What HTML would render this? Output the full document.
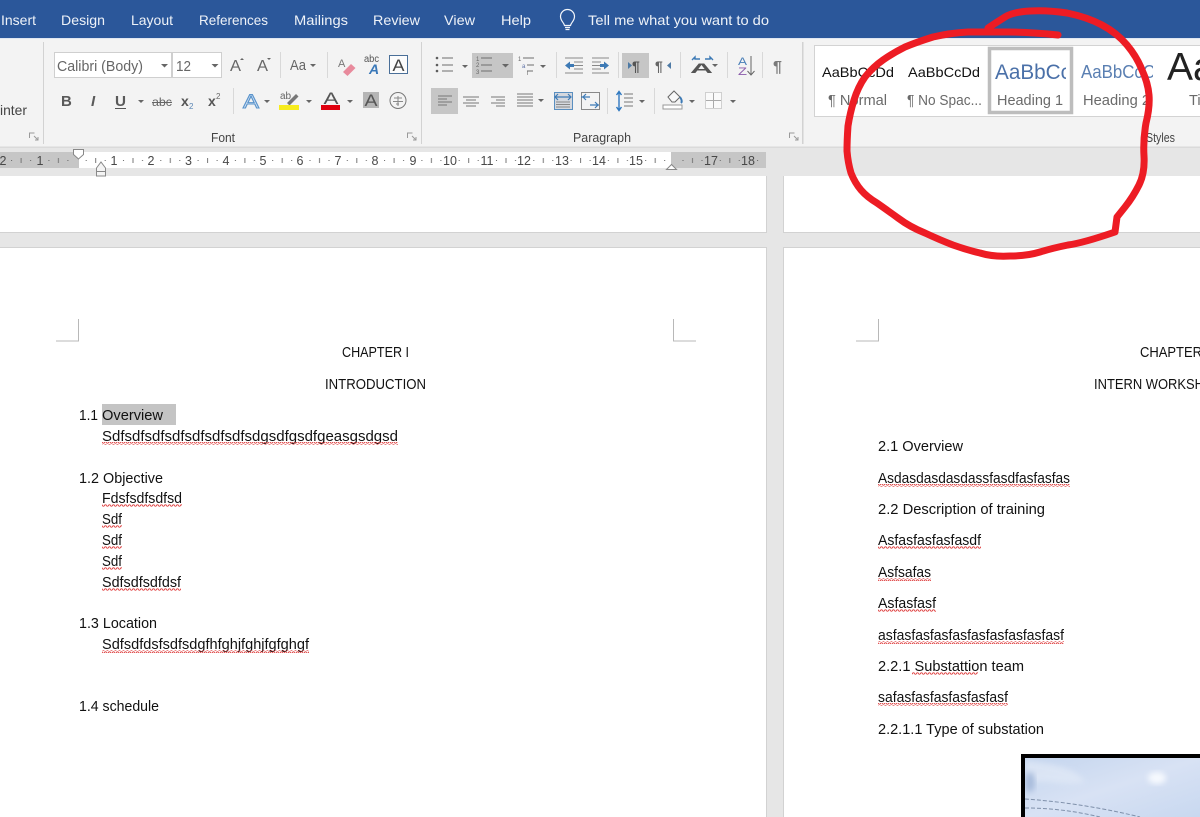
<!DOCTYPE html>
<html><head><meta charset="utf-8"><style>
html,body{margin:0;padding:0;background:#fff;overflow:hidden}
svg{display:block}
text{font-family:"Liberation Sans",sans-serif}
.tab{font-size:14px;fill:#eef2f8}
.doc{font-size:14.500px;fill:#111}
.lbl{font-size:12.500px;fill:#444}
.rul{font-size:12.500px;fill:#484848}
.sty{font-size:14.500px;fill:#6a6a6a}
</style></head><body>
<svg xmlns="http://www.w3.org/2000/svg" width="1200" height="817" viewBox="0 0 1200 817">
<defs>
<pattern id="sq" width="4" height="3" patternUnits="userSpaceOnUse"><path d="M0 2.200 L1 .8 L2 .8 L3 2.200 L4 2.200" fill="none" stroke="#dd3a3a" stroke-width=".9"/></pattern>
<pattern id="tk" x="114" y="153" width="37.300" height="15" patternUnits="userSpaceOnUse"><rect x="9" y="7" width="1" height="1" fill="#666"/><rect x="18.500" y="5" width="1" height="5" fill="#777"/><rect x="28" y="7" width="1" height="1" fill="#666"/></pattern>
<linearGradient id="sky" x1="0" y1="0" x2="1" y2="1"><stop offset="0" stop-color="#c4d5ee"/><stop offset=".5" stop-color="#d8e2f4"/><stop offset="1" stop-color="#c8d8f0"/></linearGradient>
<filter id="bl" x="-20%" y="-20%" width="140%" height="140%"><feGaussianBlur stdDeviation="3"/></filter>
<clipPath id="c1"><rect x="994" y="50" width="72" height="40"/></clipPath>
<clipPath id="c2"><rect x="1078" y="50" width="75" height="40"/></clipPath>
<clipPath id="c3"><rect x="1025" y="758" width="175" height="59"/></clipPath>
</defs>

<!-- backgrounds -->
<rect width="1200" height="817" fill="#e6e6e6"/>
<rect width="1200" height="38" fill="#2b579a"/>
<rect y="38" width="1200" height="1.500" fill="#dfe6f1"/>
<rect y="39" width="1200" height="108" fill="#f3f3f3"/>
<rect y="146.500" width="1200" height="1.500" fill="#dadada"/>

<!-- pages -->
<rect x="0" y="176" width="766" height="56" fill="#fff"/>
<rect x="784" y="176" width="416" height="56" fill="#fff"/>
<g fill="#d2d2d2">
<rect x="0" y="232" width="767" height="1"/><rect x="783" y="232" width="417" height="1"/>
<rect x="766" y="176" width="1" height="57"/><rect x="783" y="176" width="1" height="57"/>
<rect x="0" y="247" width="767" height="1"/><rect x="783" y="247" width="417" height="1"/>
<rect x="766" y="247" width="1" height="570"/><rect x="783" y="247" width="1" height="570"/>
</g>
<rect x="0" y="248" width="766" height="569" fill="#fff"/>
<rect x="784" y="248" width="416" height="569" fill="#fff"/>

<!-- tabs -->
<text class="tab" x="1" y="25" textLength="35" lengthAdjust="spacingAndGlyphs">Insert</text>
<text class="tab" x="61" y="25" textLength="44" lengthAdjust="spacingAndGlyphs">Design</text>
<text class="tab" x="131" y="25" textLength="42" lengthAdjust="spacingAndGlyphs">Layout</text>
<text class="tab" x="199" y="25" textLength="69" lengthAdjust="spacingAndGlyphs">References</text>
<text class="tab" x="294" y="25" textLength="54" lengthAdjust="spacingAndGlyphs">Mailings</text>
<text class="tab" x="373" y="25" textLength="47" lengthAdjust="spacingAndGlyphs">Review</text>
<text class="tab" x="444" y="25" textLength="31" lengthAdjust="spacingAndGlyphs">View</text>
<text class="tab" x="501" y="25" textLength="30" lengthAdjust="spacingAndGlyphs">Help</text>
<text class="tab" x="588" y="25" textLength="181" lengthAdjust="spacingAndGlyphs">Tell me what you want to do</text>
<path d="M564.500 25.500c-.5-3-4-4.500-4-9a7 7 0 0 1 14 0c0 4.500-3.500 6-4 9zM565 27.500h5M565.500 29.500h4" fill="none" stroke="#f2f5fa" stroke-width="1.200"/>

<!-- group separators -->
<g fill="#d2d2d2"><rect x="43" y="42" width="1" height="102"/><rect x="421" y="42" width="1" height="102"/><rect x="802" y="42" width="1.500" height="102"/></g>
<text x="0" y="115" font-size="14" fill="#444" textLength="27" lengthAdjust="spacingAndGlyphs">inter</text>
<g fill="none" stroke="#9a9a9a" stroke-width="1"><path d="M29.500 138v-5h5M34 136l4 4M38 137v3h-3"/><path d="M407.500 138v-5h5M412 136l4 4M416 137v3h-3"/><path d="M789.500 138v-5h5M794 136l4 4M798 137v3h-3"/></g>
<text class="lbl" x="211" y="142" textLength="24" lengthAdjust="spacingAndGlyphs">Font</text>
<text class="lbl" x="573" y="142" textLength="58" lengthAdjust="spacingAndGlyphs">Paragraph</text>

<!-- font boxes -->
<rect x="54.500" y="52.500" width="117" height="25" fill="#fff" stroke="#cfcfcf"/>
<rect x="172.500" y="52.500" width="49" height="25" fill="#fff" stroke="#cfcfcf"/>
<text x="57" y="71" font-size="15" fill="#666" textLength="86" lengthAdjust="spacingAndGlyphs">Calibri (Body)</text>
<text x="176" y="71" font-size="15" fill="#666" textLength="15" lengthAdjust="spacingAndGlyphs">12</text>
<g fill="#666"><path d="M161 64h7l-3.500 3.500z"/><path d="M211.500 64h7l-3.500 3.500z"/></g>

<!-- font row 1 -->
<text x="230" y="71" font-size="16" fill="#666" textLength="11" lengthAdjust="spacingAndGlyphs">A</text><path d="M240 60l2-2 2 2z" fill="#666"/>
<text x="257" y="71" font-size="16" fill="#666" textLength="11" lengthAdjust="spacingAndGlyphs">A</text><path d="M267 58h4l-2 2z" fill="#666"/>
<rect x="280" y="52" width="1" height="26" fill="#d8d8d8"/>
<text x="290" y="70" font-size="15" fill="#666" textLength="16" lengthAdjust="spacingAndGlyphs">Aa</text><path d="M310 64h6l-3 3z" fill="#666"/>
<rect x="327" y="52" width="1" height="26" fill="#d8d8d8"/>
<text x="338" y="67" font-size="11" fill="#777">A</text>
<path d="M343 72l8-8 4.500 4-8 8z" fill="#e88a9c"/>
<text x="364" y="62" font-size="10" fill="#555" textLength="15" lengthAdjust="spacingAndGlyphs">abc</text>
<text x="369" y="74" font-size="14" font-weight="bold" font-style="italic" fill="#3a78b8">A</text>
<rect x="389.500" y="55.500" width="18" height="18" fill="#fcfcfc" stroke="#4a6f98"/>
<text x="392.500" y="71" font-size="17" fill="#444" textLength="12" lengthAdjust="spacingAndGlyphs">A</text>

<!-- font row 2 -->
<text x="61" y="106" font-size="15" font-weight="bold" fill="#5a5a5a">B</text>
<text x="91" y="106" font-size="15" font-weight="bold" font-style="italic" fill="#5a5a5a">I</text>
<text x="115" y="106" font-size="15" font-weight="bold" fill="#5a5a5a" textLength="11" lengthAdjust="spacingAndGlyphs">U</text><rect x="115" y="108" width="11" height="1" fill="#555"/>
<path d="M138 100h6l-3 3z" fill="#666"/>
<text x="152" y="106" font-size="12" fill="#666" textLength="20" lengthAdjust="spacingAndGlyphs">abc</text><rect x="152" y="102" width="20" height="1" fill="#666"/>
<text x="181" y="106" font-size="14" font-weight="bold" fill="#555">x</text><text x="189" y="109" font-size="8" fill="#5b86b5">2</text>
<text x="208" y="106" font-size="14" font-weight="bold" fill="#555">x</text><text x="216" y="99" font-size="8" fill="#666">2</text>
<rect x="233" y="88" width="1" height="26" fill="#d8d8d8"/>
<text x="243" y="108" font-size="19" fill="#dbe7f5" stroke="#5a94cc" stroke-width="1" textLength="16" lengthAdjust="spacingAndGlyphs">A</text>
<path d="M264 100h6l-3 3z" fill="#666"/>
<text x="280" y="99" font-size="10" fill="#666">ab</text>
<path d="M287 103l9-9 2.500 2.500-9 9z" fill="#777"/>
<rect x="279" y="105" width="20" height="5" fill="#f7ec1e"/>
<path d="M306 100h6l-3 3z" fill="#666"/>
<text x="323.500" y="104" font-size="17" fill="#555" textLength="15" lengthAdjust="spacingAndGlyphs">A</text>
<rect x="321" y="105" width="19" height="5" fill="#e0000f"/>
<path d="M347 100h6l-3 3z" fill="#666"/>
<rect x="363" y="92" width="16" height="16" fill="#b5b5b5"/>
<text x="364.500" y="106" font-size="17" fill="#555" textLength="13" lengthAdjust="spacingAndGlyphs">A</text>
<circle cx="398" cy="100.500" r="8" fill="none" stroke="#777"/>
<path d="M394 98h8M393 101.500h10M398 96v10M396 104h3" fill="none" stroke="#888" stroke-width="1"/>

<!-- paragraph row 1 -->
<rect x="472" y="53" width="41" height="25" fill="#c6c6c6"/>
<rect x="622" y="53" width="27" height="25" fill="#c6c6c6"/>
<g fill="#5d5d5d"><circle cx="437" cy="58" r="1.300"/><circle cx="437" cy="65" r="1.300"/><circle cx="437" cy="71" r="1.300"/></g>
<path d="M442 58h11M442 65h11M442 71h11M481 58h11M481 65h11M481 71h11M523 58h11M527 65h7M527 71h6" stroke="#6e6e6e" stroke-width="1" fill="none"/>
<text x="476" y="61" font-size="6" fill="#666">1</text><text x="476" y="67" font-size="6" fill="#666">2</text><text x="476" y="74" font-size="6" fill="#666">3</text>
<text x="518" y="61" font-size="6" fill="#666">1</text><text x="522" y="68" font-size="6" fill="#5a6fa5">a</text><text x="527" y="75" font-size="6" fill="#666">i</text>
<g fill="#666"><path d="M462 65h6l-3 3z"/><path d="M502 64h7l-3.500 3.500z"/><path d="M540 65h6l-3 3z"/><path d="M712 64h6l-3 3z"/><path d="M538 99h6l-3 3z"/><path d="M639 100h6l-3 3z"/><path d="M689 100h6l-3 3z"/><path d="M730 100h6l-3 3z"/></g>
<g fill="#d8d8d8"><rect x="556" y="52" width="1" height="26"/><rect x="618" y="52" width="1" height="26"/><rect x="680" y="52" width="1" height="26"/><rect x="727" y="52" width="1" height="26"/><rect x="762" y="52" width="1" height="26"/></g>
<path d="M565 58h18M574 62h9M574 65.500h9M574 69h9M565 73h18M592 58h17M592 62h9M592 65.500h9M592 69h9M592 73h17" stroke="#888" stroke-width="1" fill="none"/>
<path d="M565 65.500l5-4v2.500h4v3h-4v2.500zM609 65.500l-5-4v2.500h-4v3h4v2.500z" fill="#3d7ab5"/>
<path d="M628 62v7l4-3.500z" fill="#4e7aa5"/>
<text x="632" y="71" font-size="14" font-weight="bold" fill="#555">¶</text>
<text x="655" y="71" font-size="14" font-weight="bold" fill="#666">¶</text>
<path d="M671 62v7l-4-3.500z" fill="#4e7aa5"/>
<path d="M692 60l3-3v2h5M713 60l-3-3v2h-5" stroke="#3d7ab5" stroke-width="1.400" fill="none"/>
<text x="690" y="73" font-size="14" font-weight="bold" fill="#555" textLength="23" lengthAdjust="spacingAndGlyphs">A</text>
<text x="738" y="65" font-size="11" fill="#4a7fb8" textLength="9" lengthAdjust="spacingAndGlyphs">A</text><text x="738" y="75" font-size="11" fill="#8b5bab" textLength="9" lengthAdjust="spacingAndGlyphs">Z</text>
<path d="M751 56v19M747.500 71l3.500 4 3.500-4" stroke="#666" fill="none"/>
<text x="773" y="72" font-size="16" font-weight="bold" fill="#7a7a7a">¶</text>

<!-- paragraph row 2 -->
<rect x="431" y="88" width="27" height="26" fill="#c6c6c6"/>
<path d="M438 96h14M438 99h9M438 102h14M438 105h9M463 97h16M466 100h10M463 103h16M466 106h10M491 97h14M496 100h9M491 103h14M496 106h9M517 94h16M517 97h16M517 100h16M517 103h16M517 106h16" stroke="#777" stroke-width="1" fill="none"/>
<rect x="554.500" y="92.500" width="18" height="17" fill="#d5d8de" stroke="#5a8fc0"/>
<path d="M555 97h16M558 94l-3 3 3 3M568 94l3 3-3 3" stroke="#3d7ab5" stroke-width="1.200" fill="none"/>
<path d="M556 102h14M556 104.500h14M556 107h14" stroke="#888"/>
<rect x="581.500" y="92.500" width="18" height="17" fill="none" stroke="#888"/>
<path d="M581 97h9M586 94l-3 3 3 3M590 105h9M595 102l3 3-3 3" stroke="#3d7ab5" stroke-width="1.200" fill="none"/>
<rect x="607" y="88" width="1" height="26" fill="#d8d8d8"/><rect x="654" y="88" width="1" height="26" fill="#d8d8d8"/>
<path d="M619 92v18M616.500 95l2.500-3.500 2.500 3.500M616.500 107l2.500 3.500 2.500-3.500" stroke="#2f78c0" stroke-width="1.400" fill="none"/>
<path d="M624 94h9M624 98h9M624 102h9M624 106h9" stroke="#777" fill="none"/>
<path d="M668 97l6-6 6 6-5 5h-3z" fill="#f8f8f8" stroke="#666"/>
<path d="M680 97c2 3 2 5 1 6" stroke="#3d7ab5" stroke-width="2" fill="none"/>
<rect x="663" y="105" width="19" height="4" fill="#fff" stroke="#999"/>
<rect x="705.500" y="92.500" width="16" height="16" fill="#fafafa" stroke="#aaa" stroke-dasharray="1 1"/>
<path d="M713.500 93v15M706 100.500h15" stroke="#aaa" fill="none"/>

<!-- gallery -->
<rect x="814.500" y="45.500" width="390" height="71" fill="#fff" stroke="#d3d3d3"/>
<text x="822" y="77" font-size="14" fill="#111" textLength="72" lengthAdjust="spacingAndGlyphs">AaBbCcDd</text>
<text x="908" y="77" font-size="14" fill="#111" textLength="72" lengthAdjust="spacingAndGlyphs">AaBbCcDd</text>
<rect x="989.500" y="48.500" width="82" height="64" fill="#fff" stroke="#bdbdbd" stroke-width="3.500"/>
<g clip-path="url(#c1)"><text x="995" y="79" font-size="21" fill="#4a70a8" textLength="76" lengthAdjust="spacingAndGlyphs">AaBbCc</text></g>
<g clip-path="url(#c2)"><text x="1081" y="78" font-size="18" fill="#5a7fb2" textLength="74" lengthAdjust="spacingAndGlyphs">AaBbCcC</text></g>
<text x="1167" y="80" font-size="39" fill="#222">Aa</text>
<text class="sty" x="828" y="105" textLength="59" lengthAdjust="spacingAndGlyphs">¶ Normal</text>
<text class="sty" x="907" y="105" textLength="75" lengthAdjust="spacingAndGlyphs">¶ No Spac...</text>
<text class="sty" x="997" y="105" textLength="66" lengthAdjust="spacingAndGlyphs">Heading 1</text>
<text class="sty" x="1083" y="105" textLength="67" lengthAdjust="spacingAndGlyphs">Heading 2</text>
<text class="sty" x="1189" y="105">Ti</text>
<text class="lbl" x="1146" y="142" textLength="29" lengthAdjust="spacingAndGlyphs">Styles</text>

<!-- ruler -->
<rect x="0" y="152" width="79" height="16" fill="#c6c6c6"/>
<rect x="79" y="152" width="592" height="16" fill="#fff"/>
<rect x="671" y="152" width="95" height="16" fill="#c6c6c6"/>
<rect x="0" y="153" width="766" height="15" fill="url(#tk)"/>
<g text-anchor="middle">
<text class="rul" x="3" y="165">2</text><text class="rul" x="40" y="165">1</text><text class="rul" x="114" y="165">1</text><text class="rul" x="151" y="165">2</text><text class="rul" x="188.500" y="165">3</text><text class="rul" x="226" y="165">4</text><text class="rul" x="263" y="165">5</text><text class="rul" x="300" y="165">6</text><text class="rul" x="338" y="165">7</text><text class="rul" x="375" y="165">8</text><text class="rul" x="413" y="165">9</text><text class="rul" x="450" y="165">10</text><text class="rul" x="487" y="165">11</text><text class="rul" x="524" y="165">12</text><text class="rul" x="562" y="165">13</text><text class="rul" x="599" y="165">14</text><text class="rul" x="636" y="165">15</text><text class="rul" x="711" y="165">17</text><text class="rul" x="748" y="165">18</text>
</g>
<path d="M73.500 149.500h10v5l-5 4.500-5-4.500z" fill="#fff" stroke="#888"/>
<path d="M96.500 168l4.500-6 4.500 6v3.500h-9zM96.500 171.500v4.500h9v-4.500" fill="#f4f4f4" stroke="#888"/>
<path d="M666.500 169.500l5-5 5 5z" fill="#fff" stroke="#888"/>

<!-- margin marks -->
<path d="M78.500 319v22H56M673.500 319v22H696M878.500 319v22H856" fill="none" stroke="#b8b8b8"/>

<!-- left doc -->
<rect x="102" y="404" width="74" height="21" fill="#c4c4c4"/>
<text class="doc" x="342" y="357" textLength="67" lengthAdjust="spacingAndGlyphs">CHAPTER I</text>
<text class="doc" x="325" y="389" textLength="101" lengthAdjust="spacingAndGlyphs">INTRODUCTION</text>
<text class="doc" x="79" y="420" textLength="19" lengthAdjust="spacingAndGlyphs">1.1</text>
<text class="doc" x="102" y="420" textLength="61" lengthAdjust="spacingAndGlyphs">Overview</text>
<text class="doc" x="102" y="441" textLength="296" lengthAdjust="spacingAndGlyphs">Sdfsdfsdfsdfsdfsdfsdfsdgsdfgsdfgeasgsdgsd</text>
<text class="doc" x="79" y="483" textLength="84" lengthAdjust="spacingAndGlyphs">1.2 Objective</text>
<text class="doc" x="102" y="503" textLength="80" lengthAdjust="spacingAndGlyphs">Fdsfsdfsdfsd</text>
<text class="doc" x="102" y="524" textLength="20" lengthAdjust="spacingAndGlyphs">Sdf</text>
<text class="doc" x="102" y="545" textLength="20" lengthAdjust="spacingAndGlyphs">Sdf</text>
<text class="doc" x="102" y="566" textLength="20" lengthAdjust="spacingAndGlyphs">Sdf</text>
<text class="doc" x="102" y="587" textLength="79" lengthAdjust="spacingAndGlyphs">Sdfsdfsdfdsf</text>
<text class="doc" x="79" y="628" textLength="78" lengthAdjust="spacingAndGlyphs">1.3 Location</text>
<text class="doc" x="102" y="649" textLength="207" lengthAdjust="spacingAndGlyphs">Sdfsdfdsfsdfsdgfhfghjfghjfgfghgf</text>
<text class="doc" x="79" y="711" textLength="80" lengthAdjust="spacingAndGlyphs">1.4 schedule</text>
<g fill="url(#sq)">
<rect x="102" y="442" width="296" height="3"/><rect x="102" y="504" width="80" height="3"/><rect x="102" y="525" width="20" height="3"/><rect x="102" y="546" width="20" height="3"/><rect x="102" y="567" width="20" height="3"/><rect x="102" y="588" width="79" height="3"/><rect x="102" y="650" width="207" height="3"/>
</g>

<!-- right doc -->
<text class="doc" x="1140" y="357" textLength="62" lengthAdjust="spacingAndGlyphs">CHAPTER</text>
<text class="doc" x="1094" y="389" textLength="110" lengthAdjust="spacingAndGlyphs">INTERN WORKSH</text>
<text class="doc" x="878" y="451" textLength="85" lengthAdjust="spacingAndGlyphs">2.1 Overview</text>
<text class="doc" x="878" y="483" textLength="192" lengthAdjust="spacingAndGlyphs">Asdasdasdasdassfasdfasfasfas</text>
<text class="doc" x="878" y="514" textLength="167" lengthAdjust="spacingAndGlyphs">2.2 Description of training</text>
<text class="doc" x="878" y="545" textLength="103" lengthAdjust="spacingAndGlyphs">Asfasfasfasfasdf</text>
<text class="doc" x="878" y="577" textLength="53" lengthAdjust="spacingAndGlyphs">Asfsafas</text>
<text class="doc" x="878" y="608" textLength="58" lengthAdjust="spacingAndGlyphs">Asfasfasf</text>
<text class="doc" x="878" y="640" textLength="186" lengthAdjust="spacingAndGlyphs">asfasfasfasfasfasfasfasfasfasf</text>
<text class="doc" x="878" y="671" textLength="146" lengthAdjust="spacingAndGlyphs">2.2.1 Substattion team</text>
<text class="doc" x="878" y="702" textLength="130" lengthAdjust="spacingAndGlyphs">safasfasfasfasfasfasf</text>
<text class="doc" x="878" y="734" textLength="166" lengthAdjust="spacingAndGlyphs">2.2.1.1 Type of substation</text>
<g fill="url(#sq)">
<rect x="878" y="484" width="192" height="3"/><rect x="878" y="546" width="103" height="3"/><rect x="878" y="578" width="53" height="3"/><rect x="878" y="609" width="58" height="3"/><rect x="878" y="641" width="186" height="3"/><rect x="912" y="672" width="66" height="3"/><rect x="878" y="703" width="130" height="3"/>
</g>

<!-- picture -->
<rect x="1021" y="754" width="179" height="63" fill="#000"/>
<rect x="1025" y="758" width="175" height="59" fill="url(#sky)"/>
<g clip-path="url(#c3)">
<path d="M1025 760c20 3 50 6 60 22-20 6-45-6-60 4z" fill="#e2eaf7" opacity=".7" filter="url(#bl)"/>
<ellipse cx="1157" cy="778" rx="9" ry="6" fill="#f6f9fe" filter="url(#bl)"/>
<ellipse cx="1030" cy="782" rx="5" ry="10" fill="#a8bcdc" filter="url(#bl)"/>
<path d="M1025 799c30 2 70 7 115 18M1025 808c25 0 50 3 75 9" stroke="#7f90aa" stroke-width="1" stroke-dasharray="4 2" fill="none"/>
</g>

<!-- red circle -->
<path d="M1058 35Q1030 32 1008 32Q987 32 968 32Q950 33 933 37Q917 42 905 47Q893 53 883 60Q873 67 865 77Q858 87 854 100Q850 113 848 126Q847 140 847 151Q848 163 851 173Q855 183 861 190Q867 197 877 203Q887 210 898 218Q910 227 925 233Q940 240 953 245Q967 250 980 253Q993 257 1010 256Q1027 256 1040 252Q1053 248 1068 245Q1083 243 1115 232L1117 217L1125 207Q1133 197 1139 185Q1145 173 1144 156Q1143 140 1146 123Q1150 107 1149 95Q1148 83 1142 70Q1137 57 1127 45Q1117 33 1102 25Q1087 17 1067 13Q1047 10 1030 11Q1013 12 1005 17Q997 22 988 28" fill="none" stroke="#ed1c24" stroke-width="7" stroke-linejoin="round" stroke-linecap="round"/>
</svg>
</body></html>
